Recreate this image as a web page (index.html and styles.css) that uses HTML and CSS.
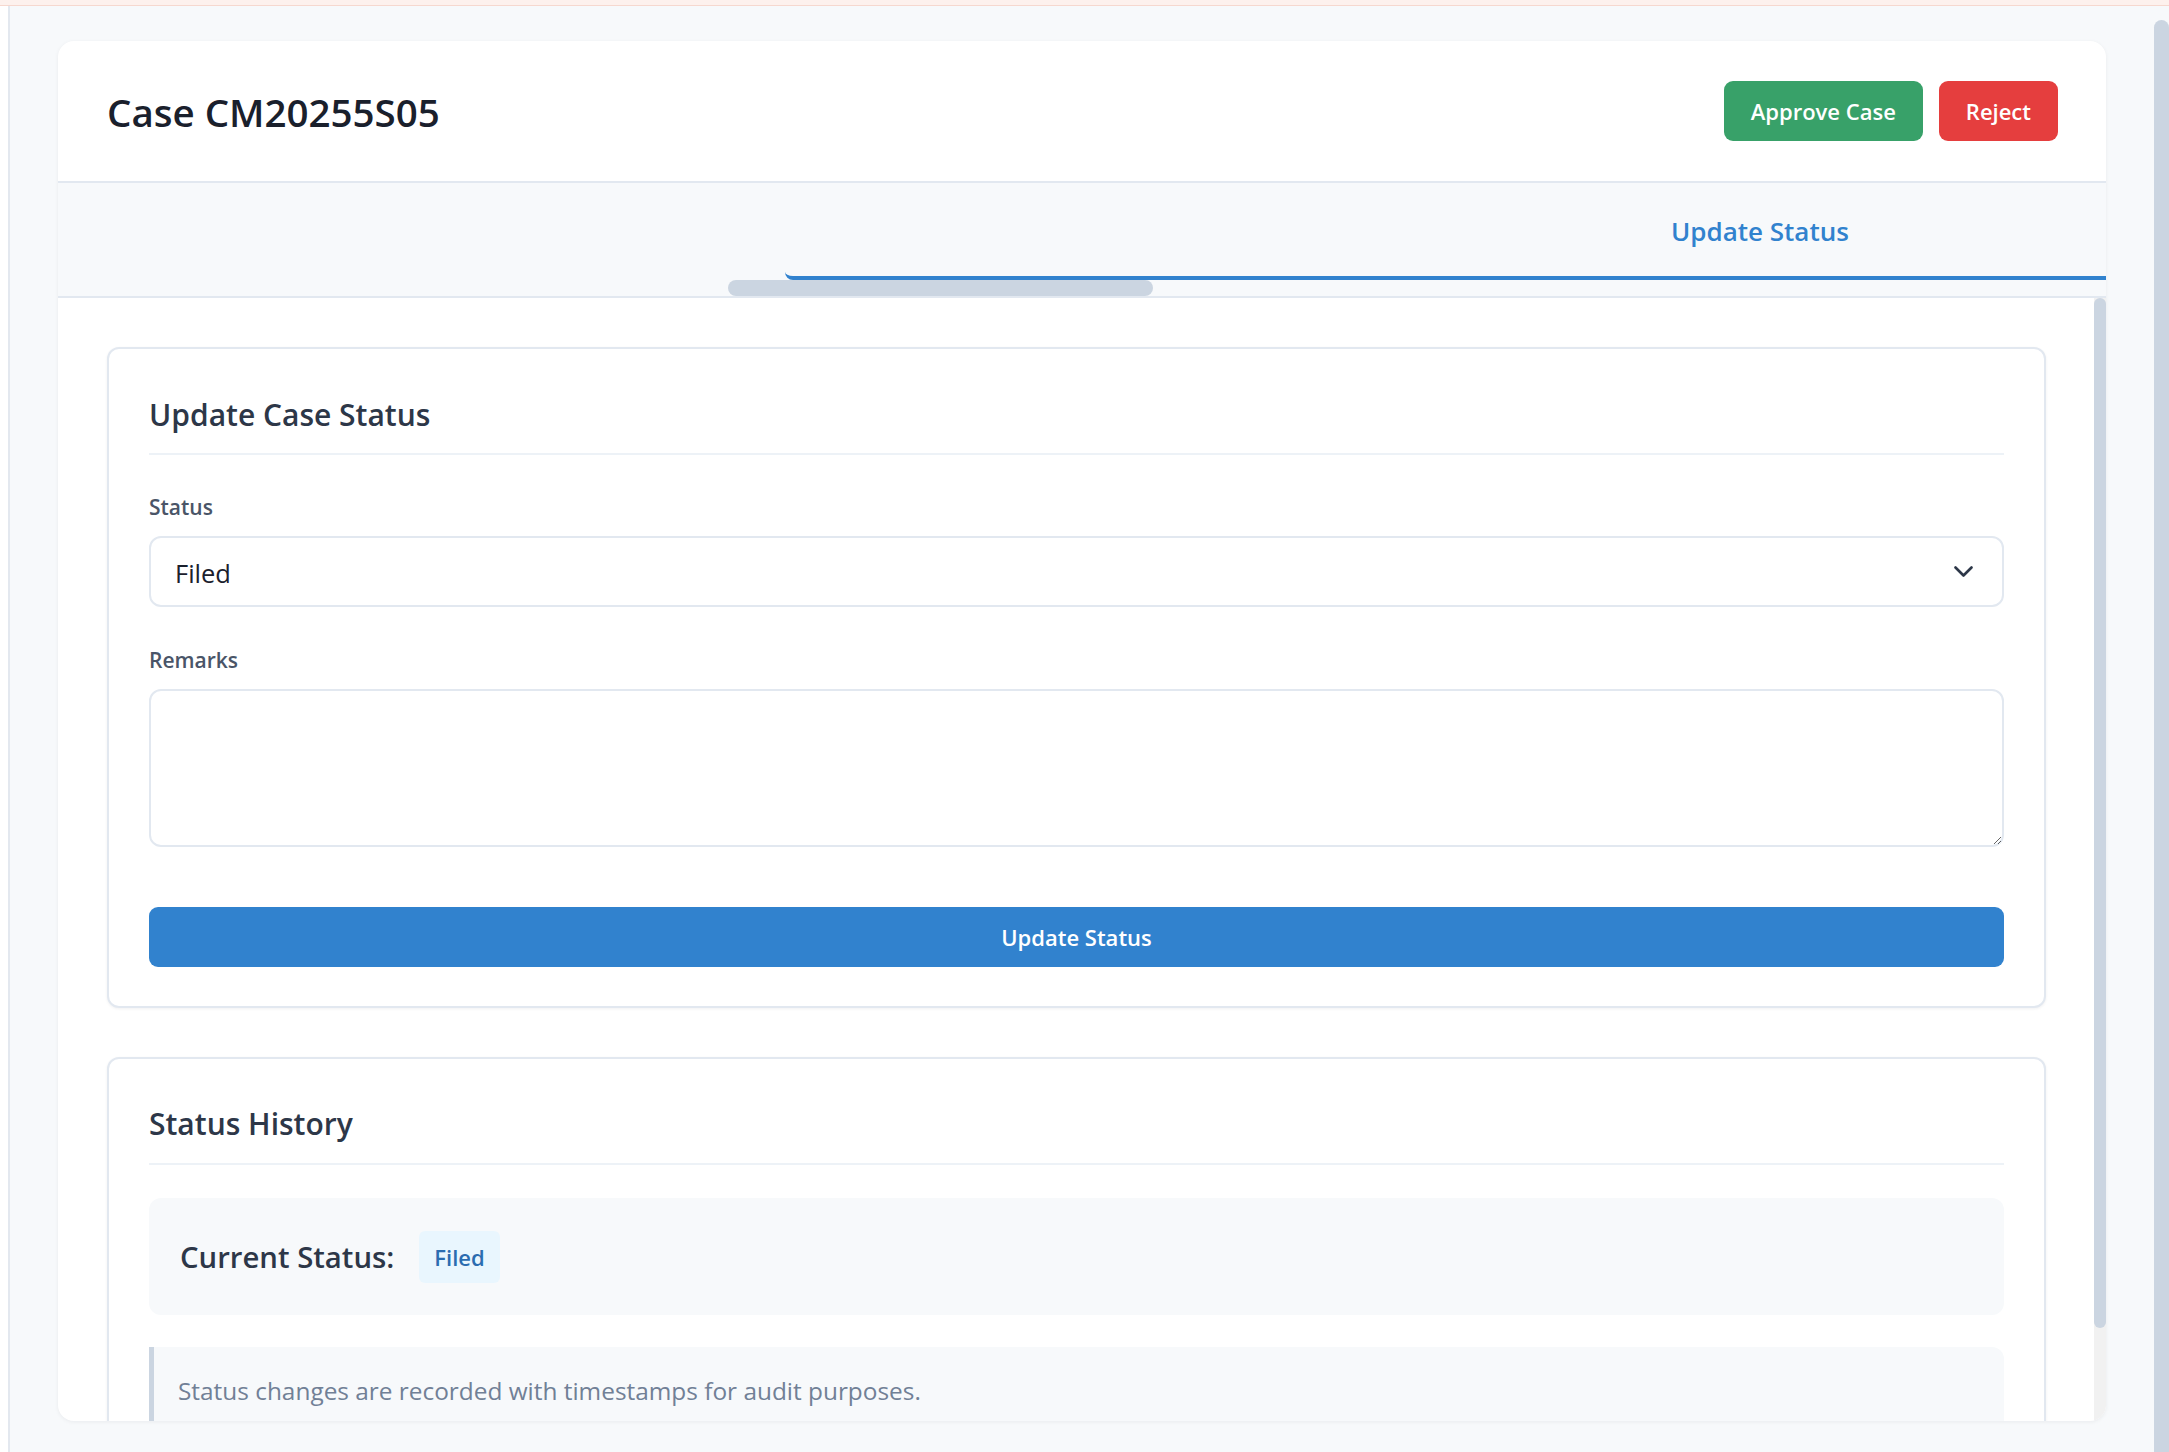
FILE: index.html
```html
<!DOCTYPE html>
<html lang="en">
<head>
<meta charset="utf-8">
<title>Case CM20255S05</title>
<link rel="stylesheet" href="styles.css">
</head>
<body>
<div class="topband"></div>
<div class="frame">
  <div class="leftstrip"></div>
  <main class="main">
    <section class="case-card">
      <header class="case-header">
        <h1 class="case-title">Case CM20255S05</h1>
        <div class="actions">
          <button class="btn btn-approve">Approve Case</button>
          <button class="btn btn-reject">Reject</button>
        </div>
      </header>
      <nav class="tabs">
        <div class="tab-row">
          <div class="tab active">Update Status</div>
        </div>
        <div class="hscroll"><div class="hthumb"></div></div>
      </nav>
      <div class="content">
        <div class="scroll-area">
          <div class="panel">
            <h3 class="panel-title">Update Case Status</h3>
            <label class="field-label">Status</label>
            <div class="select-wrap">
              <select class="select"><option>Filed</option></select>
              <svg class="chev" width="19" height="11" viewBox="0 0 19 11"><polyline points="1.5,1.5 9.5,9.5 17.5,1.5" fill="none" stroke="#2d3748" stroke-width="2.6" stroke-linecap="round" stroke-linejoin="round"/></svg>
            </div>
            <label class="field-label second">Remarks</label>
            <textarea class="textarea"></textarea>
            <button class="btn-primary">Update Status</button>
          </div>
          <div class="panel panel-history">
            <h3 class="panel-title">Status History</h3>
            <div class="current">
              <span class="current-label">Current Status:</span>
              <span class="badge">Filed</span>
            </div>
            <div class="note">Status changes are recorded with timestamps for audit purposes.</div>
          </div>
        </div>
        <div class="vscroll">
          <div class="vthumb"></div>
          <div class="vrest"></div>
        </div>
      </div>
    </section>
  </main>
  <div class="pagescroll"><div class="pagethumb"></div></div>
</div>
</body>
</html>
```

FILE: styles.css
```css
* { box-sizing: border-box; }
html, body { margin: 0; padding: 0; height: 100%; }
body {
  font-family: "Open Sans", "Noto Sans", sans-serif;
  background: #f7f9fb;
  display: flex;
  flex-direction: column;
  height: 100vh;
  overflow: hidden;
}
.topband {
  height: 6px;
  background: #fdf1ed;
  border-bottom: 1px solid #f6d8cf;
  flex: none;
}
.frame {
  flex: 1;
  min-height: 0;
  display: flex;
}
.leftstrip {
  width: 10px;
  background: #ffffff;
  border-right: 2px solid #e3e8ef;
  flex: none;
}
.main {
  flex: 1;
  min-width: 0;
  display: flex;
  flex-direction: column;
  padding: 35px 48px 31px 48px;
}
.pagescroll {
  width: 15px;
  flex: none;
  padding-top: 14px;
  display: flex;
  flex-direction: column;
}
.pagethumb {
  flex: 1;
  background: #cbd5e1;
  border-radius: 8px 8px 0 0;
}
.case-card {
  flex: 1;
  min-height: 0;
  background: #ffffff;
  border-radius: 16px;
  overflow: hidden;
  display: flex;
  flex-direction: column;
  box-shadow: 0 1px 4px rgba(15, 23, 42, 0.06);
}
.case-header {
  height: 142px;
  flex: none;
  display: flex;
  align-items: center;
  justify-content: space-between;
  padding: 2px 48px 0 49px;
  border-bottom: 2px solid #e2e8f0;
}
.case-title {
  margin: 0;
  font-size: 38.5px;
  font-weight: 600;
  color: #1a202c;
}
.actions { display: flex; gap: 16px; margin-top: -2px; }
.btn {
  height: 60px;
  padding: 0 27px;
  border: none;
  border-radius: 9px;
  color: #ffffff;
  font-family: inherit;
  font-size: 22px;
  font-weight: 600;
}
.btn-approve { background: #38a169; }
.btn-reject { background: #e53e3e; }

.tabs {
  flex: none;
  background: #f7f9fb;
  border-bottom: 2px solid #e2e8f0;
  display: flex;
  flex-direction: column;
}
.tab-row {
  height: 97px;
  display: flex;
}
.tab {
  margin-left: 727px;
  flex: 1;
  display: flex;
  align-items: center;
  padding-left: 886px;
  padding-top: 3px;
  border-bottom: 4px solid #3182ce;
  border-bottom-left-radius: 8px;
  color: #3182ce;
  font-size: 26px;
  font-weight: 600;
}
.hscroll { height: 16px; display: flex; }
.hthumb {
  margin-left: 670px;
  width: 425px;
  height: 16px;
  background: #cbd5e1;
  border-radius: 8px;
}

.content {
  flex: 1;
  min-height: 0;
  display: flex;
}
.scroll-area {
  flex: 1;
  min-width: 0;
  overflow: hidden;
  padding: 49px 48px 0 49px;
}
.vscroll {
  width: 12px;
  flex: none;
  background: #f1f1f1;
  display: flex;
  flex-direction: column;
}
.vthumb {
  flex: 1;
  background: #cbd5e1;
  border-radius: 6px;
}
.vrest { height: 93px; flex: none; }

.panel {
  border: 2px solid #e2e8f0;
  border-radius: 12px;
  padding: 40px 40px 39px 40px;
  background: #ffffff;
  box-shadow: 0 1px 3px rgba(15, 23, 42, 0.06);
}
.panel-history { margin-top: 49px; padding-bottom: 0; }
.panel-title {
  margin: 0;
  font-size: 30px;
  line-height: 48px;
  font-weight: 600;
  color: #2d3748;
  padding-top: 2px;
  padding-bottom: 14px;
  border-bottom: 2px solid #edf2f7;
}
.panel-history .panel-title { padding-top: 1px; padding-bottom: 15px; }
.field-label {
  display: block;
  margin-top: 37px;
  margin-bottom: 12px;
  height: 32px;
  line-height: 31.5px;
  font-size: 21px;
  font-weight: 600;
  color: #4a5568;
}
.field-label.second { margin-top: 38px; }
.select-wrap { position: relative; }
.select {
  width: 100%;
  height: 71px;
  appearance: none;
  -webkit-appearance: none;
  border: 2px solid #e2e8f0;
  border-radius: 12px;
  background: #ffffff;
  padding: 2px 24px 0;
  font-family: inherit;
  font-size: 25.5px;
  color: #1a202c;
}
.chev {
  position: absolute;
  right: 31px;
  top: 30px;
}
.textarea {
  display: block;
  width: 100%;
  height: 158px;
  border: 2px solid #e2e8f0;
  border-radius: 12px;
  resize: vertical;
  font-family: inherit;
  font-size: 22px;
  padding: 12px 24px;
}
.btn-primary {
  display: block;
  width: 100%;
  height: 60px;
  margin-top: 60px;
  border: none;
  border-radius: 9px;
  background: #3182ce;
  color: #ffffff;
  font-family: inherit;
  font-size: 22px;
  font-weight: 600;
}
.current {
  margin-top: 33px;
  background: #f7f9fb;
  border-radius: 12px;
  padding: 33px 31px 32px;
  display: flex;
  align-items: center;
  gap: 25px;
}
.current-label {
  font-size: 29.3px;
  font-weight: 600;
  color: #2d3748;
}
.badge {
  height: 52px;
  display: flex;
  align-items: center;
  padding: 0 15px;
  border-radius: 6px;
  background: #e9f6fe;
  color: #2b6cb0;
  font-size: 22px;
  font-weight: 600;
}
.note {
  margin-top: 32px;
  background: #f7f9fb;
  border-left: 5px solid #cbd5e1;
  border-radius: 0 12px 12px 0;
  padding: 27px 24px;
  font-size: 24.4px;
  line-height: 34.5px;
  color: #718096;
}
```
